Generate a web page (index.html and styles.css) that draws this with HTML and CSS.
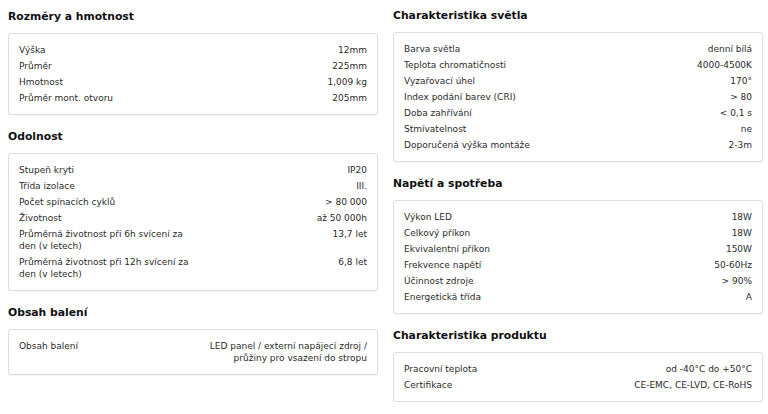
FILE: index.html
```html
<!DOCTYPE html>
<html lang="cs">
<head>
<meta charset="utf-8">
<title>Parametry</title>
<link rel="stylesheet" href="styles.css">
</head>
<body>
<div class="page">
  <div class="col col-left">
    <section class="sec">
      <h2 class="sec-title">Rozměry a hmotnost</h2>
      <div class="card">
        <div class="row"><span class="lbl">Výška</span><span class="val">12mm</span></div>
        <div class="row"><span class="lbl">Průměr</span><span class="val">225mm</span></div>
        <div class="row"><span class="lbl">Hmotnost</span><span class="val">1,009 kg</span></div>
        <div class="row"><span class="lbl">Průměr mont. otvoru</span><span class="val">205mm</span></div>
      </div>
    </section>
    <section class="sec">
      <h2 class="sec-title">Odolnost</h2>
      <div class="card">
        <div class="row"><span class="lbl">Stupeň kryti</span><span class="val">IP20</span></div>
        <div class="row"><span class="lbl">Třída izolace</span><span class="val">III.</span></div>
        <div class="row"><span class="lbl">Počet spínacích cyklů</span><span class="val">&gt; 80 000</span></div>
        <div class="row"><span class="lbl">Životnost</span><span class="val">až 50 000h</span></div>
        <div class="row"><span class="lbl">Průměrná životnost při 6h svícení za den (v letech)</span><span class="val">13,7 let</span></div>
        <div class="row"><span class="lbl">Průměrná životnost při 12h svícení za den (v letech)</span><span class="val">6,8 let</span></div>
      </div>
    </section>
    <section class="sec">
      <h2 class="sec-title">Obsah balení</h2>
      <div class="card">
        <div class="row"><span class="lbl">Obsah balení</span><span class="val">LED panel / externí napájecí zdroj / průžiny pro vsazení do stropu</span></div>
      </div>
    </section>
  </div>
  <div class="col">
    <section class="sec">
      <h2 class="sec-title">Charakteristika světla</h2>
      <div class="card">
        <div class="row"><span class="lbl">Barva světla</span><span class="val">denní bílá</span></div>
        <div class="row"><span class="lbl">Teplota chromatičnosti</span><span class="val">4000-4500K</span></div>
        <div class="row"><span class="lbl">Vyzařovací úhel</span><span class="val">170°</span></div>
        <div class="row"><span class="lbl">Index podání barev (CRI)</span><span class="val">&gt; 80</span></div>
        <div class="row"><span class="lbl">Doba zahřívání</span><span class="val">&lt; 0,1 s</span></div>
        <div class="row"><span class="lbl">Stmívatelnost</span><span class="val">ne</span></div>
        <div class="row"><span class="lbl">Doporučená výška montáže</span><span class="val">2-3m</span></div>
      </div>
    </section>
    <section class="sec">
      <h2 class="sec-title">Napětí a spotřeba</h2>
      <div class="card">
        <div class="row"><span class="lbl">Výkon LED</span><span class="val">18W</span></div>
        <div class="row"><span class="lbl">Celkový příkon</span><span class="val">18W</span></div>
        <div class="row"><span class="lbl">Ekvivalentní příkon</span><span class="val">150W</span></div>
        <div class="row"><span class="lbl">Frekvence napětí</span><span class="val">50-60Hz</span></div>
        <div class="row"><span class="lbl">Účinnost zdroje</span><span class="val">&gt; 90%</span></div>
        <div class="row"><span class="lbl">Energetická třída</span><span class="val">A</span></div>
      </div>
    </section>
    <section class="sec">
      <h2 class="sec-title">Charakteristika produktu</h2>
      <div class="card">
        <div class="row"><span class="lbl">Pracovní teplota</span><span class="val">od -40°C do +50°C</span></div>
        <div class="row"><span class="lbl">Certifikace</span><span class="val">CE-EMC, CE-LVD, CE-RoHS</span></div>
      </div>
    </section>
  </div>
</div>
</body>
</html>
```
FILE: styles.css
```css
html, body {
  margin: 0;
  padding: 0;
  background: #ffffff;
}
body {
  font-family: "DejaVu Sans", Verdana, sans-serif;
  font-size: 9px;
  color: #2b2b2b;
}
.page {
  display: grid;
  grid-template-columns: 370px 370px;
  column-gap: 15px;
  padding: 9px 0 0 8px;
  align-items: start;
}
.col {
  display: flex;
  flex-direction: column;
  gap: 15px;
}
.col-left {
  padding-top: 1px;
}
.sec-title {
  margin: 0 0 9px 0;
  font-size: 10.8px;
  line-height: 14px;
  font-weight: bold;
  color: #111;
}
.card {
  border: 1px solid #dcdcdc;
  border-radius: 3px;
  box-shadow: 0 1px 1px rgba(0, 0, 0, 0.04);
  padding: 8px 10px;
  background: #fff;
}
.row {
  display: flex;
  padding: 2px 0;
  line-height: 12px;
}
.lbl {
  flex: 0 0 50%;
}
.val {
  flex: 1 1 auto;
  text-align: right;
}
```
